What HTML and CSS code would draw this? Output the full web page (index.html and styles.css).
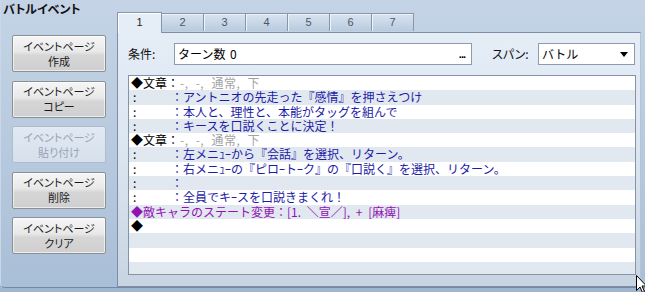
FILE: index.html
```html
<!DOCTYPE html>
<html lang="ja">
<head>
<meta charset="utf-8">
<link rel="stylesheet" href="styles.css">
</head>
<body>
<div class="group">
  <div class="left">
    <div class="title">バトルイベント</div>
    <div class="buttons">
      <div class="btn"><span>イベントページ</span><span>作成</span></div>
      <div class="btn"><span>イベントページ</span><span>コピー</span></div>
      <div class="btn disabled"><span>イベントページ</span><span>貼り付け</span></div>
      <div class="btn"><span>イベントページ</span><span>削除</span></div>
      <div class="btn"><span>イベントページ</span><span>クリア</span></div>
    </div>
  </div>
  <div class="right">
    <div class="tabs">
      <div class="tab active">1</div>
      <div class="tab">2</div>
      <div class="tab">3</div>
      <div class="tab">4</div>
      <div class="tab">5</div>
      <div class="tab">6</div>
      <div class="tab">7</div>
    </div>
    <div class="panel">
      <div class="cond-row">
        <span class="label">条件:</span>
        <div class="input"><span class="val">ターン数 0</span><span class="dots">...</span></div>
        <span class="label span-label">スパン:</span>
        <div class="select"><span class="val">バトル</span><span class="arrow"></span></div>
      </div>
      <div class="list">
        <div class="row"><span class="k">◆文章：</span><span class="g">-, -, 通常, 下</span></div>
        <div class="row"><span class="c1">:</span><span class="c2">：</span><span class="m">アントニオの先走った『感情』を押さえつけ</span></div>
        <div class="row"><span class="c1">:</span><span class="c2">：</span><span class="m">本人と、理性と、本能がタッグを組んで</span></div>
        <div class="row"><span class="c1">:</span><span class="c2">：</span><span class="m">キースを口説くことに決定！</span></div>
        <div class="row"><span class="k">◆文章：</span><span class="g">-, -, 通常, 下</span></div>
        <div class="row"><span class="c1">:</span><span class="c2">：</span><span class="m">左メニｭｰから『会話』を選択、リターン。</span></div>
        <div class="row"><span class="c1">:</span><span class="c2">：</span><span class="m">右メニｭｰの『ピロｰトｰク』の『口説く』を選択、リターン。</span></div>
        <div class="row"><span class="c1">:</span><span class="c2">：</span></div>
        <div class="row"><span class="c1">:</span><span class="c2">：</span><span class="m">全員でキｰスを口説きまくれ！</span></div>
        <div class="row"><span class="p">◆敵キャラのステート変更：[1. ＼宣／], + [麻痺]</span></div>
        <div class="row"><span class="k">◆</span></div>
        <div class="row"></div>
        <div class="row"></div>
        <div class="row"></div>
      </div>
    </div>
  </div>
</div>
<svg class="cursor" width="12" height="19" viewBox="0 0 12 19"><path d="M0.5 0.5 L0.5 15.5 L4 12 L6.5 17.5 L8.5 16.5 L6 11 L10.5 11 Z" fill="#fff" stroke="#000" stroke-width="1"/></svg>
</body>
</html>
```
FILE: styles.css
```css
html, body {
  margin: 0;
  padding: 0;
}
body {
  width: 645px;
  height: 292px;
  overflow: hidden;
  background: #9fb6d0;
  font-family: "Noto Sans CJK JP", "DejaVu Sans", sans-serif;
  font-size: 12px;
  color: #000;
  position: relative;
}
.group {
  box-sizing: border-box;
  width: 645px;
  height: 288px;
  display: flex;
  background: linear-gradient(#c4d4e6 0%, #bbcce0 40%, #a9bfd7 100%);
  border-left: 1px solid #c9d7e6;
  border-bottom: 1px solid #7388a2;
  border-bottom-left-radius: 5px;
}
.left {
  width: 116px;
  flex: none;
  display: flex;
  flex-direction: column;
}
.title {
  padding: 2px 0 0 2px;
  height: 16px;
  line-height: 14px;
  font-weight: bold;
  font-size: 12px;
  font-feature-settings: "palt";
  color: #111;
}
.buttons {
  margin-top: 17px;
  padding-left: 11px;
  display: flex;
  flex-direction: column;
  gap: 8.5px;
}
.btn {
  box-sizing: border-box;
  width: 94px;
  height: 37px;
  border: 1px solid #8c8f94;
  border-radius: 2px;
  background: linear-gradient(#f6f6f6 0%, #e8e8e8 45%, #d6d6d6 55%, #cfcfcf 100%);
  box-shadow: inset 0 0 0 1px rgba(255,255,255,0.6);
  display: flex;
  flex-direction: column;
  align-items: center;
  justify-content: center;
  text-align: center;
  font-size: 11px;
  line-height: 15px;
  font-feature-settings: "palt";
  color: #1a1a1a;
}
.btn span {
  display: block;
  height: 15px;
}
.btn.disabled {
  background: linear-gradient(#e1e9f3, #d6e0ec);
  border-color: #afbccb;
  color: #98a3b3;
  box-shadow: none;
}
.right {
  flex: 1;
  padding-top: 11px;
  padding-right: 4px;
  display: flex;
  flex-direction: column;
}
.tabs {
  height: 21px;
  display: flex;
  align-items: flex-end;
  position: relative;
  z-index: 2;
}
.tab {
  box-sizing: border-box;
  width: 42px;
  height: 18px;
  margin-bottom: 1px;
  border: 1px solid #8796aa;
  border-bottom: none;
  border-left: none;
  background: linear-gradient(#d8e3ef, #b9cbdf);
  box-shadow: inset 1px 1px 0 #eef3f9;
  text-align: center;
  line-height: 17px;
  font-size: 11px;
  font-family: "Liberation Sans", sans-serif;
  color: #4a5668;
}
.tab.active {
  width: 45px;
  height: 21px;
  margin-bottom: -1px;
  margin-right: -2px;
  border-left: 1px solid #8796aa;
  background: #e5edf7;
  box-shadow: inset 1px 1px 0 #ffffff;
  color: #222;
  line-height: 18px;
  position: relative;
  z-index: 3;
}
.tab.active + .tab {
  border-left: none;
  padding-left: 2px;
  width: 44px;
}
.panel {
  box-sizing: border-box;
  height: 255px;
  border: 1px solid #7f8ea4;
  border-right-color: #b4c3d5;
  background: linear-gradient(#e5edf7 0%, #dbe5f0 50%, #c8d4e2 100%);
  padding: 10px 4px 0 10px;
}
.cond-row {
  display: flex;
  align-items: center;
  height: 22px;
}
.label {
  width: 46px;
  font-feature-settings: "palt";
  font-size: 12px;
  line-height: 22px;
  color: #111;
}
.span-label {
  margin-left: 20px;
}
.input {
  box-sizing: border-box;
  width: 298px;
  height: 22px;
  background: #fff;
  border: 1px solid #8d9bad;
  display: flex;
  align-items: center;
  justify-content: space-between;
  padding: 0 6px 0 3px;
}
.val {
  line-height: 20px;
  word-spacing: 2px;
}
.dots {
  font-family: "Liberation Sans", sans-serif;
  font-weight: bold;
  font-size: 11px;
  letter-spacing: -1px;
  line-height: 16px;
}
.select {
  box-sizing: border-box;
  width: 97px;
  height: 22px;
  background: #fff;
  border: 1px solid #8d9bad;
  display: flex;
  align-items: center;
  justify-content: space-between;
  padding: 0 6px 0 3px;
}
.arrow {
  width: 0;
  height: 0;
  border-left: 4px solid transparent;
  border-right: 4px solid transparent;
  border-top: 5px solid #000;
}
.list {
  box-sizing: border-box;
  margin-top: 10px;
  width: 508px;
  height: 200px;
  border: 1px solid #8593a6;
  background: #fff;
  overflow: hidden;
}
.row {
  height: 14.3px;
  line-height: 14.3px;
  padding-left: 2px;
  white-space: nowrap;
  font-size: 12px;
}
.row:nth-child(even) {
  background: #e2e8f0;
}
.k {
  color: #000;
}
.g {
  color: #a3a3a3;
  margin-left: 1px;
  word-spacing: 4px;
  letter-spacing: 0.5px;
}
.c1 {
  display: inline-block;
  width: 40px;
  padding-left: 2px;
  box-sizing: border-box;
}
.c2 {
  display: inline-block;
  width: 12px;
  color: #1c1ca6;
}
.m {
  color: #1c1ca6;
}
.p {
  color: #9211b4;
  word-spacing: 3px;
}
.cursor {
  position: absolute;
  left: 636px;
  top: 275px;
}
```
